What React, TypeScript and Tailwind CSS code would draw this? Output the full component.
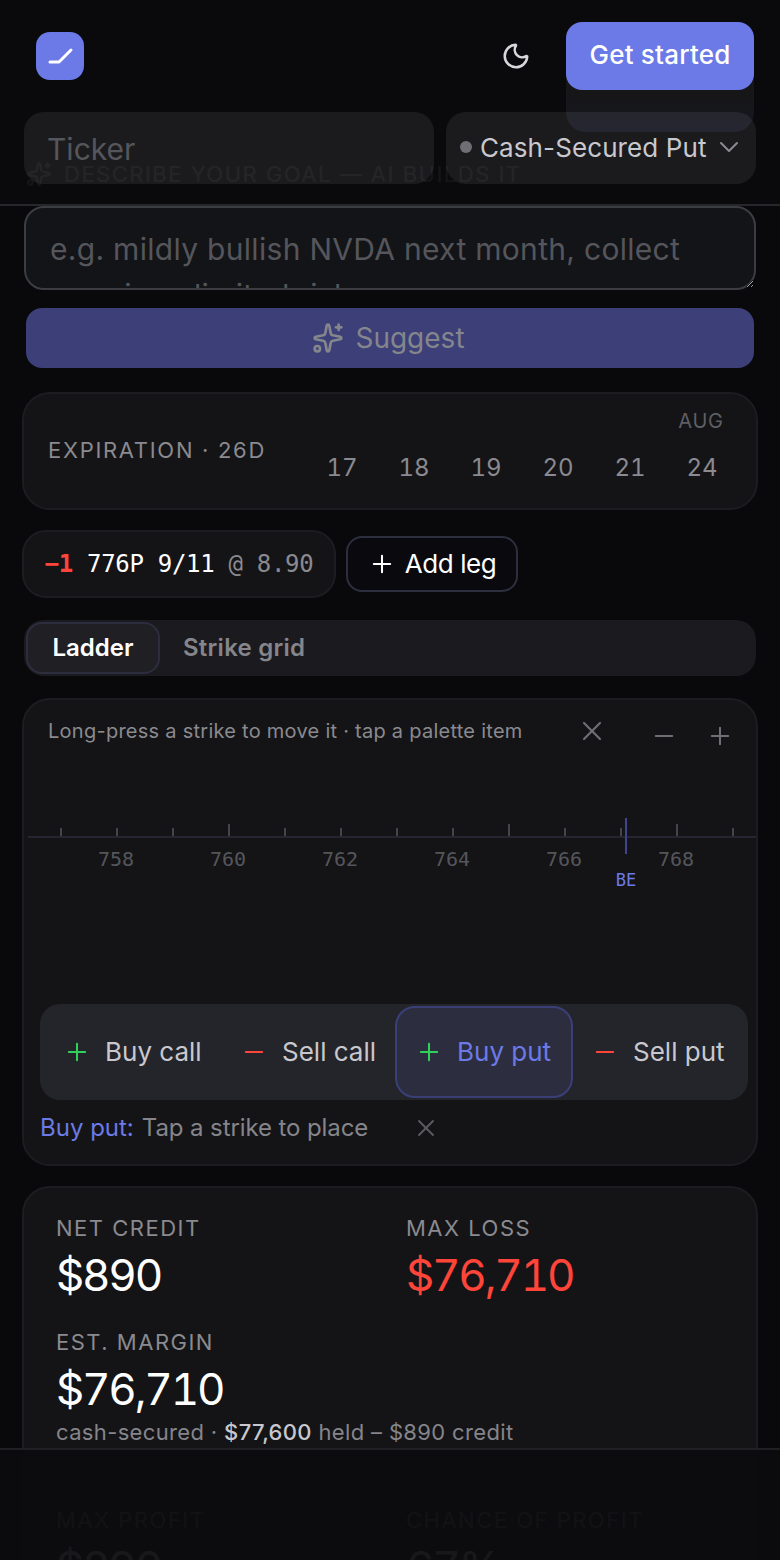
import { ChevronDown, Minus, Moon, Plus, Sparkles, X } from "lucide-react";

const sans = "[font-family:Inter,'Noto_Sans',sans-serif]";

const ticks = [61, 117, 173, 229, 285, 341, 397, 453, 509, 565, 621, 677, 733];
const tallTicks = [229, 509, 677];
const strikes = ["758", "760", "762", "764", "766", "768"];
const days = ["17", "18", "19", "20", "21", "24"];

function Stat({ label, value, red }: { label: string; value: string; red?: boolean }) {
  return (
    <div>
      <div className="text-[22px] leading-[28px] tracking-[1.5px] text-[#8a8a90]">{label}</div>
      <div
        className={`mt-[7px] text-[44px] leading-[52px] tracking-[-2.2px] tabular-nums ${
          red ? "text-[#ff453a]" : "text-white"
        }`}
      >
        {value}
      </div>
    </div>
  );
}

function PaletteItem({
  sign,
  label,
  active,
  inset,
}: {
  sign: "+" | "-";
  label: string;
  active?: boolean;
  inset: string;
}) {
  return (
    <div
      className={`flex h-[92px] items-center gap-[14px] rounded-[20px] border-2 ${inset} ${
        active ? "border-[#3a3f78] bg-[#2c2e40] text-[#6b7ae6]" : "border-transparent text-[#c8c8ce]"
      }`}
    >
      {sign === "+" ? (
        <Plus size={28} strokeWidth={1.75} className="shrink-0 text-[#30d158]" />
      ) : (
        <Minus size={28} strokeWidth={1.75} className="shrink-0 text-[#ff453a]" />
      )}
      <span className="text-[26px] leading-[32px] whitespace-nowrap">{label}</span>
    </div>
  );
}

export default function App() {
  return (
    <div className={`relative h-[1560px] w-[780px] overflow-hidden bg-[#09090c] ${sans}`}>
      <main className="flex flex-col px-[24px] pt-[160px]">
        <div className="flex h-[28px] items-center gap-[12px] pl-[2px] text-[#8a8a90]">
          <Sparkles size={26} strokeWidth={2} />
          <span className="text-[22px] tracking-[1.5px] whitespace-nowrap">DESCRIBE YOUR GOAL — AI BUILDS IT</span>
        </div>

        <textarea
          readOnly
          className="mt-[18px] h-[84px] w-[732px] resize-y overflow-hidden rounded-[20px] border-2 border-[#3c3d42] bg-[#131417] px-[24px] pt-[18px] pb-0 text-[30px] leading-[46px] tracking-[0.3px] outline-none placeholder:text-[#55565c]"
          placeholder="e.g. mildly bullish NVDA next month, collect premium, limited risk"
        />

        <div className="mx-[2px] mt-[18px] flex h-[60px] items-center justify-center gap-[11px] rounded-[16px] bg-[#3c3f78] pr-[3px] text-[#85868c]">
          <Sparkles size={32} strokeWidth={2} />
          <span className="text-[28px]">Suggest</span>
        </div>

        <section className="-mx-[2px] mt-[24px] flex h-[118px] items-start justify-between rounded-[28px] border-2 border-[#1c1d20] bg-[#141416] pl-[24px] pr-[18px]">
          <span className="mb-[2px] self-center text-[22px] tracking-[1.7px] whitespace-nowrap text-[#8a8a90]">
            EXPIRATION · 26D
          </span>
          <div className="mt-[14px] flex">
            {days.map((d, i) => (
              <div key={d} className="flex w-[72px] flex-col items-center">
                <span
                  className={`h-[26px] text-[20px] leading-[26px] tracking-[0.8px] ${
                    i === 5 ? "mr-[2px] text-[#5e5e64]" : "text-transparent"
                  }`}
                >
                  {i === 5 ? "AUG" : ""}
                </span>
                <span className="mt-[18px] text-[24px] leading-[32px] tabular-nums text-[#8a8a90]">{d}</span>
              </div>
            ))}
          </div>
        </section>

        <div className="-mx-[2px] mt-[20px] flex items-center gap-[10px]">
          <div className="flex h-[68px] w-[314px] items-center justify-center rounded-[24px] border-2 border-[#1c1d20] bg-[#141416] font-['DejaVu_Sans_Mono',monospace] text-[24px] tracking-[-0.3px] whitespace-pre">
            <span className="font-bold text-[#ff453a]">−1</span>
            <span className="text-white"> 776P 9/11</span>
            <span className="text-[#8a8a90]"> @ 8.90</span>
          </div>
          <div className="flex h-[56px] w-[172px] items-center justify-center gap-[9px] rounded-[16px] border-2 border-[#2d2e3e] bg-[#0a0a0e] pb-[1px] text-white">
            <Plus size={28} strokeWidth={1.75} />
            <span className="text-[26px] tracking-[-0.4px]">Add leg</span>
          </div>
        </div>

        <div className="mt-[22px] flex h-[56px] items-center rounded-[20px] bg-[#1b1b1f] px-[2px]">
          <div className="flex h-[52px] w-[134px] items-center justify-center rounded-[16px] border-2 border-[#2c2d3f] bg-[#1f1f24] text-[24px] font-semibold text-white">
            Ladder
          </div>
          <div className="ml-[23px] text-[24px] font-semibold tracking-[0.25px] text-[#85858b]">Strike grid</div>
        </div>

        <section className="-mx-[2px] mt-[22px] flex h-[468px] flex-col rounded-[28px] border-2 border-[#1c1d20] bg-[#141416]">
          <div className="flex h-[62px] items-center pl-[24px] text-[#6e6e74]">
            <span className="w-[528px] text-[20px] tracking-[0.26px] whitespace-nowrap text-[#8a8a90]">
              Long-press a strike to move it · tap a palette item
            </span>
            <X size={32} strokeWidth={1.6} className="shrink-0" />
            <Minus size={28} strokeWidth={1.75} className="mt-[10px] ml-[42px] shrink-0" />
            <Plus size={28} strokeWidth={1.75} className="mt-[10px] ml-[28px] shrink-0" />
          </div>

          <div className="relative mx-[-2px] h-[166px]">
            <div className="absolute left-[6px] right-[2px] top-[74px] h-[2px] bg-[#25262f]" />
            {ticks.map((x) => (
              <div
                key={x}
                className={`absolute w-[2px] bg-[#44454b] ${tallTicks.includes(x) ? "top-[62px] h-[12px]" : "top-[66px] h-[8px]"}`}
                style={{ left: x - 23 }}
              />
            ))}
            <div className="absolute left-[603px] top-[56px] h-[36px] w-[2px] bg-[#3f4590]" />
            {strikes.map((s, i) => (
              <div
                key={s}
                className="absolute top-[84px] w-[56px] text-center font-['DejaVu_Sans_Mono',monospace] text-[20px] leading-[26px] text-[#55565c]"
                style={{ left: 66 + i * 112 }}
              >
                {s}
              </div>
            ))}
            <div className="absolute left-[584px] top-[107px] w-[40px] text-center font-['DejaVu_Sans_Mono',monospace] text-[17px] leading-[22px] text-[#6b7ae6]">
              BE
            </div>
          </div>

          <div className="mx-[16px] mt-[76px] grid h-[96px] w-[708px] grid-cols-[177px_178px_178px_175px] items-center rounded-[20px] bg-[#24252a]">
            <PaletteItem sign="+" label="Buy call" inset="pl-[21px]" />
            <PaletteItem sign="-" label="Sell call" inset="pl-[21px]" />
            <PaletteItem sign="+" label="Buy put" active inset="pl-[18px]" />
            <PaletteItem sign="-" label="Sell put" inset="pl-[16px]" />
          </div>

          <div className="ml-[16px] mt-[12px] flex h-[32px] items-center text-[24px] leading-[32px]">
            <span className="text-[#6b7ae6]">Buy put:</span>
            <span className="ml-[8px] tracking-[-0.1px] text-[#85858b]">Tap a strike to place</span>
            <X size={28} strokeWidth={1.6} className="ml-[44px] text-[#5a5a60]" />
          </div>
        </section>

        <section className="-mx-[2px] mt-[20px] h-[420px] rounded-[28px] border-2 border-[#1c1d20] bg-[#141416] px-[32px] pt-[26px]">
          <div className="grid grid-cols-2 gap-x-[32px]">
            <Stat label="NET CREDIT" value="$890" />
            <Stat label="MAX LOSS" value="$76,710" red />
          </div>
          <div className="mt-[27px]">
            <Stat label="EST. MARGIN" value="$76,710" />
            <div className="mt-[2px] text-[22px] leading-[30px] tracking-[0.35px] text-[#85858b]">
              cash-secured · <span className="font-medium text-[#c8c8ce]">$77,600</span> held – $890 credit
            </div>
          </div>
          <div className="mt-[59px] grid grid-cols-2 gap-x-[32px]">
            <Stat label="MAX PROFIT" value="$890" />
            <Stat label="CHANCE OF PROFIT" value="67%" />
          </div>
        </section>
      </main>

      {/* translucent header floating over the scrolled page */}
      <header className="absolute inset-x-0 top-0 h-[206px] border-b-2 border-[#26272a] bg-[#0b0b0d]/[0.92]">
        <div className="absolute left-[566px] top-[60px] h-[72px] w-[188px] rounded-[20px] bg-gradient-to-b from-white/[0.05] via-white/[0.05] to-[#8a90ff]/[0.09]" />
        <div className="relative flex h-[112px] items-center pl-[36px] pr-[26px]">
          <div className="flex h-[48px] w-[48px] items-center justify-center rounded-[14px] bg-[#6b7ae6]">
            <svg width="28" height="24" viewBox="0 0 28 24" fill="none">
              <path d="M4 18h9L25 6" stroke="white" strokeWidth="3" strokeLinecap="round" strokeLinejoin="round" />
            </svg>
          </div>
          <Moon size={30} strokeWidth={2} className="ml-auto text-[#d8d8dc]" />
          <div className="ml-[35px] flex h-[68px] w-[188px] items-center justify-center rounded-[16px] bg-[#6b7ae6] pb-[3px] text-[26px] font-medium tracking-[0.2px] whitespace-nowrap text-white">
            Get started
          </div>
        </div>
        <div className="relative flex gap-[12px] px-[24px]">
          <div className="flex h-[72px] w-[410px] items-center rounded-[20px] bg-white/[0.07] px-[23px] pt-[2px] text-[30px] text-[#55565c]">
            Ticker
          </div>
          <div className="flex h-[72px] w-[310px] items-center rounded-[20px] bg-white/[0.07] pb-[2px] pl-[14px] text-[#c8c8ce]">
            <span className="h-[12px] w-[12px] shrink-0 rounded-full bg-[#6e6e74]" />
            <span className="ml-[8px] text-[26px] tracking-[0.1px] whitespace-nowrap">Cash-Secured Put</span>
            <ChevronDown size={32} strokeWidth={1.5} className="ml-[6px] shrink-0 text-[#8a8a90]" />
          </div>
        </div>
      </header>

      {/* translucent bottom bar */}
      <div className="absolute inset-x-0 bottom-0 h-[112px] border-t-2 border-[#1f2023] bg-[#0c0c0e]/[0.95]" />
    </div>
  );
}
